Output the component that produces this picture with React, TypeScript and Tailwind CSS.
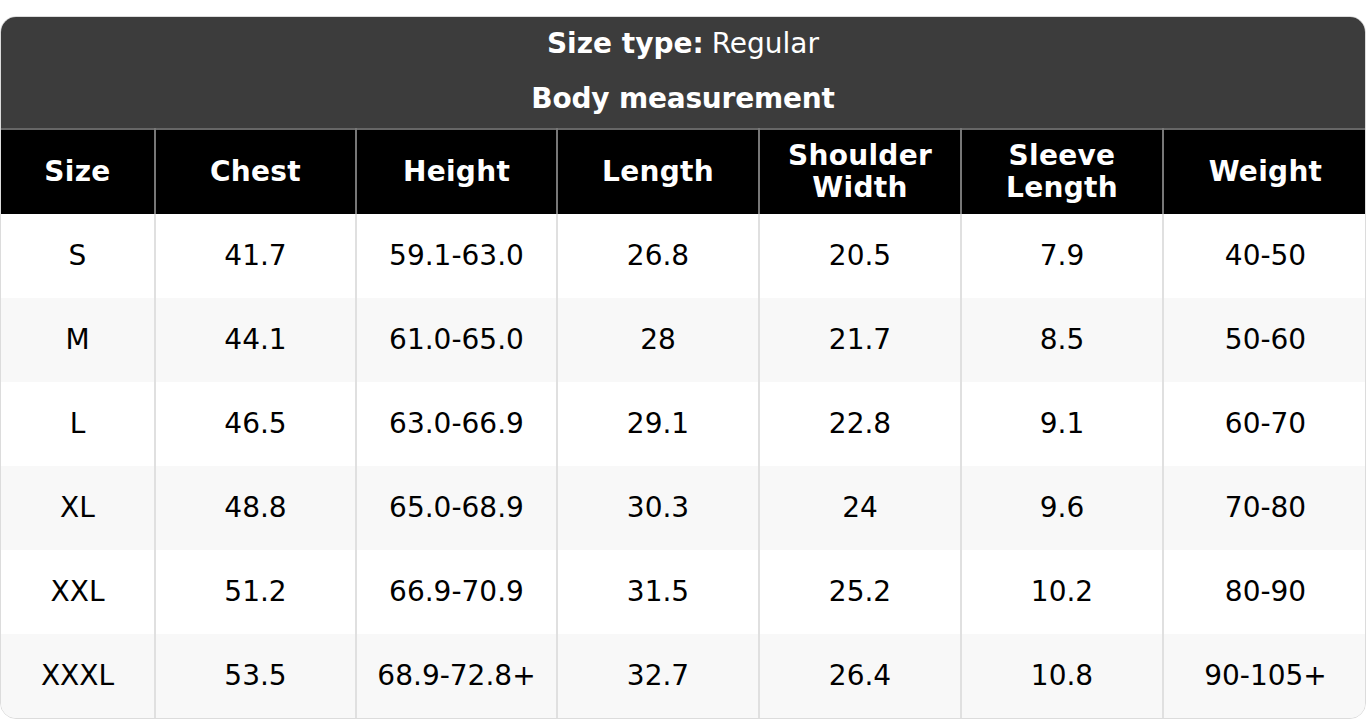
const headers = [
  ["Size"],
  ["Chest"],
  ["Height"],
  ["Length"],
  ["Shoulder", "Width"],
  ["Sleeve", "Length"],
  ["Weight"],
];

const rows = [
  ["S", "41.7", "59.1-63.0", "26.8", "20.5", "7.9", "40-50"],
  ["M", "44.1", "61.0-65.0", "28", "21.7", "8.5", "50-60"],
  ["L", "46.5", "63.0-66.9", "29.1", "22.8", "9.1", "60-70"],
  ["XL", "48.8", "65.0-68.9", "30.3", "24", "9.6", "70-80"],
  ["XXL", "51.2", "66.9-70.9", "31.5", "25.2", "10.2", "80-90"],
  ["XXXL", "53.5", "68.9-72.8+", "32.7", "26.4", "10.8", "90-105+"],
];

const widths = ["w-[154px]", "w-[201px]", "w-[201px]", "w-[202px]", "w-[202px]", "w-[202px]", "w-[204px]"];

export default function App() {
  return (
    <div className="bg-white min-h-[720px] pt-4" style={{ fontFamily: '"DejaVu Sans", sans-serif' }}>
      <div className="rounded-2xl overflow-hidden border border-[#dcdcdc]">
        <div className="bg-[#3c3c3c] text-white text-center h-[111px] flex flex-col">
          <div className="h-[54px] flex items-center justify-center text-[28px]">
            <span className="font-bold">Size type:</span>
            <span className="ml-2">Regular</span>
          </div>
          <div className="h-[56px] flex items-center justify-center text-[28px] font-bold tracking-[-0.2px]">
            Body measurement
          </div>
        </div>
        <table className="w-full border-collapse table-fixed">
          <thead>
            <tr className="bg-black text-white h-[85px] border-t-2 border-[#666]">
              {headers.map((h, i) => (
                <th
                  key={i}
                  className={`${widths[i]} font-bold text-[28px] leading-[32px] tracking-[0.3px] text-center ${i > 0 ? "border-l-2 border-[#777]" : ""}`}
                >
                  {h.map((line) => (
                    <div key={line}>{line}</div>
                  ))}
                </th>
              ))}
            </tr>
          </thead>
          <tbody>
            {rows.map((r, ri) => (
              <tr key={ri} className={`h-[84px] ${ri % 2 === 1 ? "bg-[#f8f8f8]" : "bg-white"}`}>
                {r.map((c, ci) => (
                  <td
                    key={ci}
                    className={`text-center text-[28px] text-black ${ci > 0 ? "border-l-2 border-[#e0e0e0]" : ""}`}
                  >
                    {c}
                  </td>
                ))}
              </tr>
            ))}
          </tbody>
        </table>
      </div>
    </div>
  );
}
